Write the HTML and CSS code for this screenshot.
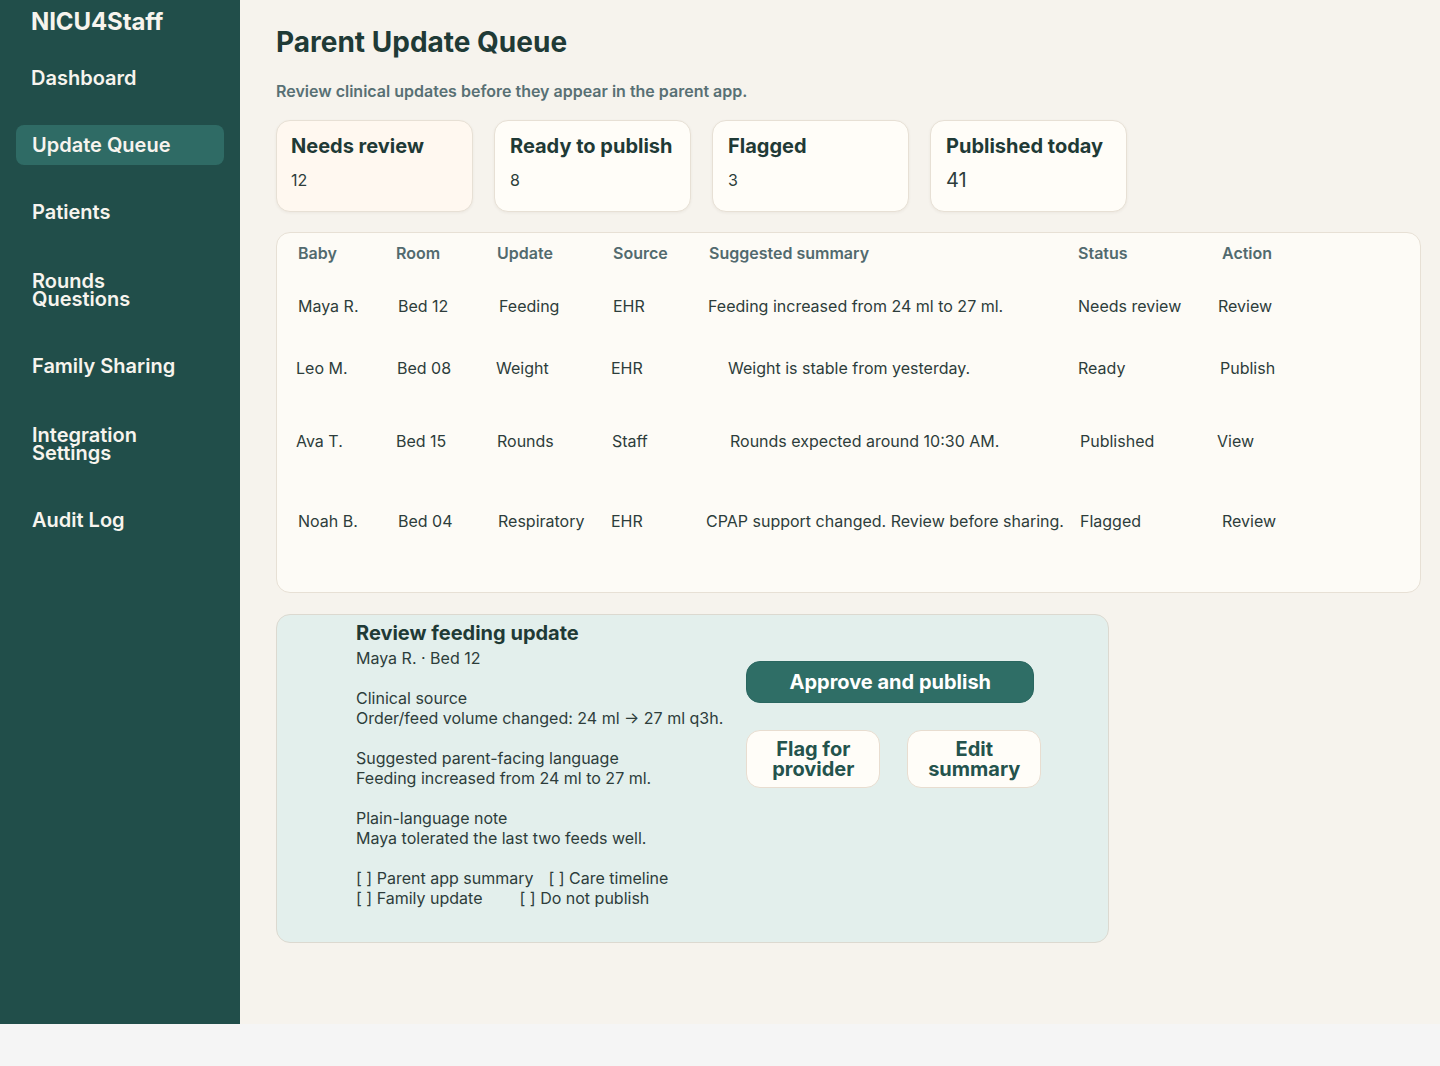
FILE: index.html
```html
<!DOCTYPE html>
<html lang="en">
<head>
<meta charset="utf-8">
<title>NICU4Staff – Parent Update Queue</title>
<link rel="stylesheet" href="styles.css">
</head>
<body>
<div class="app">
  <aside class="sidebar">
    <div class="logo">NICU4Staff</div>
    <nav class="nav">
      <a class="nav-item nav-dash">Dashboard</a>
      <a class="nav-item active">Update Queue</a>
      <a class="nav-item">Patients</a>
      <a class="nav-item two">Rounds<br>Questions</a>
      <a class="nav-item">Family Sharing</a>
      <a class="nav-item two">Integration<br>Settings</a>
      <a class="nav-item">Audit Log</a>
    </nav>
  </aside>
  <main class="main">
    <h1 class="title">Parent Update Queue</h1>
    <p class="subtitle">Review clinical updates before they appear in the parent app.</p>

    <section class="stats">
      <div class="stat stat-warm">
        <div class="stat-label">Needs review</div>
        <div class="stat-value">12</div>
      </div>
      <div class="stat">
        <div class="stat-label">Ready to publish</div>
        <div class="stat-value">8</div>
      </div>
      <div class="stat">
        <div class="stat-label">Flagged</div>
        <div class="stat-value">3</div>
      </div>
      <div class="stat">
        <div class="stat-label">Published today</div>
        <div class="stat-value big">41</div>
      </div>
    </section>

    <section class="queue">
      <div class="row head">
        <span>Baby</span><span>Room</span><span>Update</span><span>Source</span><span>Suggested summary</span><span>Status</span><span>Action</span>
      </div>
      <div class="row r1">
        <span>Maya R.</span><span class="n2">Bed 12</span><span class="n2">Feeding</span><span>EHR</span><span class="m1">Feeding increased from 24 ml to 27 ml.</span><span>Needs review</span><span class="m4">Review</span>
      </div>
      <div class="row r2">
        <span class="m2">Leo M.</span><span class="n1">Bed 08</span><span class="m1">Weight</span><span class="m2">EHR</span><span class="ind">Weight is stable from yesterday.</span><span>Ready</span><span class="m2">Publish</span>
      </div>
      <div class="row r3">
        <span class="m2">Ava T.</span><span>Bed 15</span><span>Rounds</span><span class="m1">Staff</span><span class="ind2">Rounds expected around 10:30 AM.</span><span class="n2">Published</span><span class="m5">View</span>
      </div>
      <div class="row r4">
        <span>Noah B.</span><span class="n2">Bed 04</span><span class="n1">Respiratory</span><span class="m2">EHR</span><span class="m3">CPAP support changed. Review before sharing.</span><span class="n2">Flagged</span><span>Review</span>
      </div>
    </section>

    <section class="review">
      <div class="review-text">
        <h2 class="review-title">Review feeding update</h2>
        <p class="meta">Maya R. · Bed 12</p>
        <p class="block">Clinical source<br>Order/feed volume changed: 24 ml → 27 ml q3h.</p>
        <p class="block">Suggested parent-facing language<br>Feeding increased from 24 ml to 27 ml.</p>
        <p class="block">Plain-language note<br>Maya tolerated the last two feeds well.</p>
        <p class="block">[ ] Parent app summary<span class="opt-a">[ ] Care timeline</span><br>[ ] Family update<span class="opt-b">[ ] Do not publish</span></p>
      </div>
      <div class="review-actions">
        <button class="btn primary">Approve and publish</button>
        <div class="btn-row">
          <button class="btn secondary">Flag for<br>provider</button>
          <button class="btn secondary">Edit<br>summary</button>
        </div>
      </div>
    </section>
  </main>
</div>
</body>
</html>
```

FILE: styles.css
```css
* { box-sizing: border-box; }

html, body {
  margin: 0;
  padding: 0;
  background: #f5f5f5;
  font-family: Inter, "Noto Sans", "Liberation Sans", sans-serif;
  color: #2d3d3b;
}

.app {
  display: flex;
  width: 1440px;
  height: 1024px;
}

/* Sidebar */
.sidebar {
  width: 240px;
  flex: none;
  background: #214e4a;
  color: #f7f4ee;
  padding: 8px 16px 0 16px;
}

.logo {
  font-size: 24px;
  line-height: 28px;
  font-weight: 700;
  padding-left: 15px;
  margin-bottom: 22px;
  letter-spacing: -0.1px;
}

.nav {
  display: flex;
  flex-direction: column;
  gap: 27px;
}

.nav-item {
  display: block;
  font-size: 20px;
  font-weight: 600;
  line-height: 18px;
  padding: 11px 16px;
  border-radius: 8px;
  color: #f7f4ee;
}

.nav-item.two { padding-top: 13px; padding-bottom: 11px; }

.nav-dash { padding-left: 15px; }

.nav-item.active {
  background: #2f6b65;
}

/* Main */
.main {
  flex: 1;
  background: #f6f3ed;
  padding: 25px 19px 0 36px;
}

.title {
  margin: 0;
  font-size: 28px;
  line-height: 34px;
  font-weight: 700;
  color: #1f3a36;
}

.subtitle {
  margin: 22px 0 0;
  font-size: 16px;
  line-height: 20px;
  font-weight: 600;
  color: #587074;
}

.stats {
  display: flex;
  gap: 21px;
  margin-top: 19px;
}

.stat {
  width: 197px;
  height: 92px;
  background: #fffdf8;
  border: 1px solid #e7e0d5;
  border-radius: 14px;
  box-shadow: 0 1px 3px rgba(60, 50, 30, 0.06);
  padding: 13px 15px 0 15px;
}

.stat-warm {
  background: #fff8f0;
  padding-left: 14px;
}

.stat-label {
  font-size: 20px;
  line-height: 24px;
  font-weight: 700;
  color: #1f3a36;
}

.stat-value {
  margin-top: 12px;
  font-size: 16px;
  line-height: 20px;
  color: #2d3d3b;
}

.stat-value.big {
  font-size: 20px;
}

/* Queue table */
.queue {
  margin-top: 20px;
  background: #fdfbf6;
  border: 1px solid #e7e0d5;
  border-radius: 14px;
  padding: 10px 0 60px 21px;
  height: 361px;
}

.row {
  display: grid;
  grid-template-columns: 98px 101px 116px 96px 369px 144px 1fr;
  font-size: 16px;
  line-height: 20px;
  color: #2d3d3b;
}

.row.head {
  font-weight: 600;
  color: #526a6e;
}

.r1 { margin-top: 33px; }
.r2 { margin-top: 42px; }
.r3 { margin-top: 53px; }
.r4 { margin-top: 60px; }

.n1 { padding-left: 1px; }
.n2 { padding-left: 2px; }
.m1 { margin-left: -1px; }
.m2 { margin-left: -2px; }
.m3 { margin-left: -3px; }
.m4 { margin-left: -4px; }
.m5 { margin-left: -5px; }
.ind { padding-left: 19px; }
.ind2 { padding-left: 21px; }

/* Review panel */
.review {
  margin-top: 21px;
  width: 833px;
  height: 329px;
  background: #e3efec;
  border: 1px solid #dcd9d0;
  border-radius: 14px;
  display: flex;
  gap: 23px;
  padding: 6px 0 0 79px;
}

.review-text {
  font-size: 16px;
  line-height: 20px;
  color: #2d3d3b;
}

.review-title {
  margin: 0;
  font-size: 20px;
  line-height: 24px;
  font-weight: 700;
  color: #1f3a36;
}

.review-text p {
  margin: 0;
}

.review-text p.meta {
  margin-top: 3px;
}

.review-text p.block {
  margin-top: 20px;
}

.opt-a { margin-left: 15px; }
.opt-b { margin-left: 37px; }

.review-actions {
  padding-top: 40px;
  display: flex;
  flex-direction: column;
  gap: 27px;
}

.btn {
  font-family: inherit;
  font-size: 20px;
  font-weight: 700;
  border-radius: 14px;
  cursor: pointer;
}

.btn.primary {
  width: 288px;
  height: 42px;
  background: #2f6e66;
  color: #ffffff;
  border: 1px solid #2a6760;
  line-height: 24px;
  padding: 0;
}

.btn-row {
  display: flex;
  gap: 27px;
}

.btn.secondary {
  width: 134px;
  height: 58px;
  background: #fffdf8;
  color: #24534d;
  border: 1px solid #e8ddd0;
  line-height: 20px;
  padding: 0;
}
```
